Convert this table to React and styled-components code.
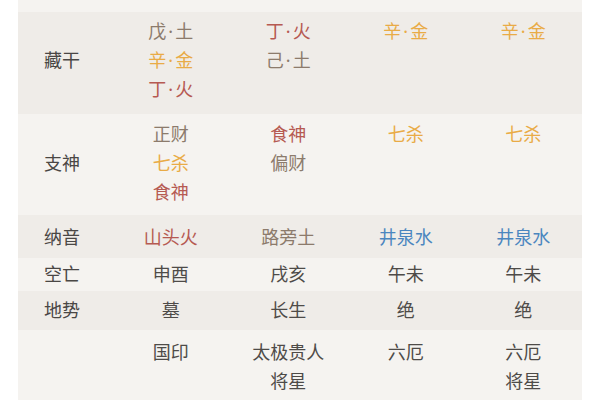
import React from "react";
import styled, { createGlobalStyle } from "styled-components";

const GlobalStyle = createGlobalStyle`
  html, body {
    margin: 0;
    padding: 0;
    background: #ffffff;
  }
  body {
    font-family: "Noto Sans", "Noto Sans CJK SC", sans-serif;
    overflow: hidden;
  }
`;

const colors = {
  earth: "#8c7b6c",
  metal: "#e9ab46",
  fire: "#b65a52",
  water: "#4b86bf",
  plain: "#4e4b48",
};

const Table = styled.div`
  margin: 0 18px;
  display: flex;
  flex-direction: column;
  height: 400px;
  overflow: hidden;
`;

const TopStrip = styled.div`
  height: 12px;
  flex-shrink: 0;
  background: #f5f3f0;
`;

const Row = styled.div`
  display: grid;
  grid-template-columns: 94px repeat(4, 1fr);
  flex-shrink: 0;
  padding: ${(p) => p.$pad[0]}px 0 ${(p) => p.$pad[1]}px;
  background: ${(p) => (p.$dark ? "#efece8" : "#f5f3f0")};
`;

const Label = styled.div`
  align-self: center;
  padding-left: 26px;
  font-size: 18px;
  line-height: 29px;
  color: #4a4745;
`;

const Cell = styled.div`
  display: flex;
  flex-direction: column;
  align-items: center;
`;

const Item = styled.span`
  font-size: 18px;
  line-height: 29px;
  color: ${(p) => colors[p.$tone] || colors.plain};
`;

const Dot = styled.span`
  padding: 0 2px;
`;

const rows = [
  {
    label: "藏干",
    dark: true,
    pad: [5, 10],
    cells: [
      [["戊·土", "earth"], ["辛·金", "metal"], ["丁·火", "fire"]],
      [["丁·火", "fire"], ["己·土", "earth"]],
      [["辛·金", "metal"]],
      [["辛·金", "metal"]],
    ],
  },
  {
    label: "支神",
    dark: false,
    pad: [6, 8],
    cells: [
      [["正财", "earth"], ["七杀", "metal"], ["食神", "fire"]],
      [["食神", "fire"], ["偏财", "earth"]],
      [["七杀", "metal"]],
      [["七杀", "metal"]],
    ],
  },
  {
    label: "纳音",
    dark: true,
    pad: [8, 6],
    cells: [
      [["山头火", "fire"]],
      [["路旁土", "earth"]],
      [["井泉水", "water"]],
      [["井泉水", "water"]],
    ],
  },
  {
    label: "空亡",
    dark: false,
    pad: [2, 2],
    cells: [[["申酉"]], [["戌亥"]], [["午未"]], [["午未"]]],
  },
  {
    label: "地势",
    dark: true,
    pad: [5, 5],
    cells: [[["墓"]], [["长生"]], [["绝"]], [["绝"]]],
  },
  {
    label: "",
    dark: false,
    pad: [8, 8],
    cells: [
      [["国印"]],
      [["太极贵人"], ["将星"]],
      [["六厄"]],
      [["六厄"], ["将星"]],
    ],
  },
];

// 戊·土 style pairs get a little air around the dot
const renderText = (text) => {
  const parts = text.split("·");
  if (parts.length < 2) return text;
  return (
    <>
      {parts[0]}
      <Dot>·</Dot>
      {parts[1]}
    </>
  );
};

const App = () => {
  return (
    <>
      <GlobalStyle />
      <Table>
        <TopStrip />
        {rows.map((row, i) => (
          <Row key={i} $dark={row.dark} $pad={row.pad}>
            <Label>{row.label}</Label>
            {row.cells.map((cell, j) => (
              <Cell key={j}>
                {cell.map(([text, tone], k) => (
                  <Item key={k} $tone={tone}>
                    {renderText(text)}
                  </Item>
                ))}
              </Cell>
            ))}
          </Row>
        ))}
      </Table>
    </>
  );
};

export default App;
